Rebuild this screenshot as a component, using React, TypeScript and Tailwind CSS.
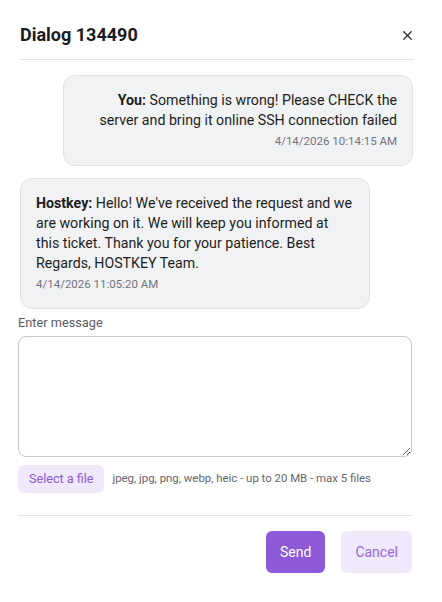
import { X } from "lucide-react";

const messages = [
  {
    id: 1,
    mine: true,
    author: "You:",
    text: "Something is wrong! Please CHECK the server and bring it online SSH connection failed",
    time: "4/14/2026 10:14:15 AM",
  },
  {
    id: 2,
    mine: false,
    author: "Hostkey:",
    text: "Hello! We've received the request and we are working on it. We will keep you informed at this ticket. Thank you for your patience. Best Regards, HOSTKEY Team.",
    time: "4/14/2026 11:05:20 AM",
  },
];

export default function App() {
  return (
    <div className="min-h-[602px] w-[442px] bg-white font-['Roboto',sans-serif] text-[#1f1f23]">
      {/* Header */}
      <div className="flex items-center justify-between pl-5 pr-7 pt-[22px]">
        <h2 className="text-[18px] font-bold leading-[26px] text-[#1b1b1f]">Dialog 134490</h2>
        <button className="-mr-[1px] text-[#2a2a2e]">
          <X size={15} strokeWidth={2} />
        </button>
      </div>
      <div className="ml-5 mr-7 mt-[11px] border-t border-[#e3e3e6]" />

      {/* Messages */}
      <div className="flex flex-col gap-3 pl-5 pr-[29px] pt-[15px]">
        {messages.map((m) => (
          <div
            key={m.id}
            className={`w-[350px] rounded-xl border border-[#e2e2e6] bg-[#f1f2f4] px-[15px] pb-[16px] pt-[14px] ${
              m.mine ? "self-end text-right" : "self-start text-left"
            }`}
          >
            <p className={`text-[14.2px] leading-[20px] text-[#1e1e22] ${m.mine ? "" : "max-w-[317px]"}`}>
              <span className="font-bold">{m.author}</span> {m.text}
            </p>
            <p className="mt-[3px] text-[11.5px] leading-[16px] text-[#74747c]">{m.time}</p>
          </div>
        ))}
      </div>

      {/* Form */}
      <div className="pl-[18px] pr-[30px] pt-[6px]">
        <label className="block text-[12.75px] leading-[16px] text-[#5b5b63]">Enter message</label>
        <textarea className="mt-[5px] block h-[121px] w-full rounded-lg border border-[#c7c7cd] bg-white px-3 py-2 text-[14px] outline-none" />
        <div className="mt-2 flex items-center gap-2">
          <button className="h-[28px] rounded-md bg-[#f0e8fb] px-[11px] text-[12.6px] text-[#8d58d6]">Select a file</button>
          <span className="text-[11.4px] text-[#66666e]">jpeg, jpg, png, webp, heic - up to 20 MB - max 5 files</span>
        </div>
        <div className="mt-[22px] border-t border-[#e3e3e6]" />
        <div className="flex justify-end gap-4 pt-[15px]">
          <button className="h-[42px] rounded-md bg-[#8d59d6] px-[14px] text-[14px] text-white">Send</button>
          <button className="h-[42px] rounded-md bg-[#f0e8fb] px-[14px] text-[14px] text-[#9a67dc]">Cancel</button>
        </div>
      </div>
    </div>
  );
}
